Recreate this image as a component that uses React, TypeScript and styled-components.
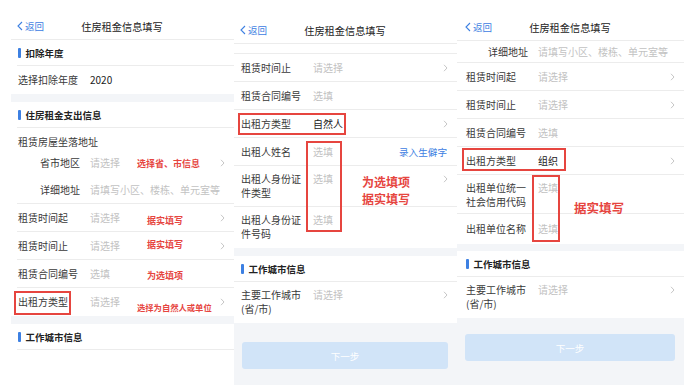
import React from "react";
import styled, { createGlobalStyle } from "styled-components";

const GlobalStyle = createGlobalStyle`
  html, body { margin: 0; padding: 0; background: #fff; }
  body { font-family: "Noto Sans CJK SC", "Noto Sans", sans-serif; }
`;

const RED = "#e6453f";
const BLUE = "#3d80e2";
const GRAY_BG = "#f3f5f8";
const LINE = "#ececec";

const Page = styled.div`
  position: relative;
  width: 684px;
  height: 385px;
  overflow: hidden;
  display: grid;
  grid-template-columns: 234px 223px 227px;
  background: #fff;
`;

// clipped headline of the article, only its bottom edge shows
const Caption = styled.div`
  position: absolute;
  left: 47px;
  top: -11px;
  font-size: 13px;
  line-height: 14px;
  font-weight: 700;
  color: #2f6fe0;
  letter-spacing: 1.5px;
  white-space: nowrap;
`;

const Panel = styled.div<{ $top: number; $left?: number; $pad: number; $inset: number }>`
  position: relative;
  display: flex;
  flex-direction: column;
  padding-top: ${(p) => p.$top}px;
  padding-left: ${(p) => p.$left ?? 0}px;
  background: #fff;
  color: #3a3a3a;
  --pad: ${(p) => p.$pad}px;
  --inset: ${(p) => p.$inset}px;
`;

const Header = styled.div`
  display: grid;
  grid-template-columns: 1fr auto 1fr;
  align-items: center;
  height: 26px;
  padding-left: calc(var(--pad) - 1px);
  border-bottom: 1px solid ${LINE};
`;

const Back = styled.span`
  display: flex;
  align-items: center;
  gap: 2px;
  color: ${BLUE};
  font-size: 9.5px;
`;

const Title = styled.span`
  font-size: 10.2px;
  color: #222;
  margin-left: calc(var(--pad) * -1);
`;

const Section = styled.div`
  display: flex;
  align-items: center;
  gap: 5px;
  height: 25px;
  margin-left: var(--inset);
  padding-left: calc(var(--pad) - var(--inset));
  border-bottom: 1px solid ${LINE};
  font-size: 9.5px;
  font-weight: 700;
  color: #222;

  &::before {
    content: "";
    width: 2.5px;
    height: 10px;
    border-radius: 1px;
    background: ${BLUE};
  }
`;

const Row = styled.div<{ $tall?: boolean; $last?: boolean; $h?: number }>`
  display: flex;
  align-items: ${(p) => (p.$tall ? "flex-start" : "center")};
  box-sizing: border-box;
  min-height: ${(p) => p.$h ?? (p.$tall ? 41 : 28)}px;
  padding: ${(p) => (p.$tall ? "6px" : "0")} 9px 0 calc(var(--pad) - var(--inset));
  margin-left: var(--inset);
  border-bottom: ${(p) => (p.$last ? "none" : `1px solid ${LINE}`)};
  font-size: 10px;
  line-height: 14px;
`;

const Label = styled.span<{ $right?: boolean }>`
  flex: none;
  width: 62px;
  margin-right: 10px;
  text-align: ${(p) => (p.$right ? "right" : "left")};
  color: #3a3a3a;
`;

const Value = styled.span<{ $filled?: boolean }>`
  color: ${(p) => (p.$filled ? "#222" : "#c2c2c2")};
  white-space: nowrap;
`;

const Link = styled.span`
  margin-left: auto;
  padding-right: 1px;
  color: ${BLUE};
  font-size: 9.6px;
`;

const Arrow = styled.span`
  display: flex;
  align-items: center;
  height: 14px;
  margin-left: auto;
`;

const Group = styled.div`
  margin-left: var(--inset);
  padding: 7px 0 0 calc(var(--pad) - var(--inset));
  border-bottom: 1px solid ${LINE};
  font-size: 10px;
  line-height: 14px;
`;

const SubRow = styled.div`
  display: flex;
  align-items: center;
  height: 27px;
  padding-right: 9px;
`;

const Gap = styled.div<{ $h: number }>`
  height: ${(p) => p.$h}px;
  background: ${GRAY_BG};
`;

const Spacer = styled.div<{ $h: number }>`
  height: ${(p) => p.$h}px;
  border-bottom: 1px solid ${LINE};
`;

const Footer = styled.div<{ $top: number }>`
  flex: 1;
  background: ${GRAY_BG};
  padding: ${(p) => p.$top}px 9px 0 8px;
`;

const NextButton = styled.button`
  display: block;
  width: 100%;
  height: 27px;
  border: none;
  border-radius: 3px;
  background: #d1e4f8;
  color: #fff;
  font-family: inherit;
  font-size: 9.5px;
`;

// red annotation layer drawn over the screenshots
const Mark = styled.div<{ $x: number; $y: number; $w: number; $h: number }>`
  position: absolute;
  left: ${(p) => p.$x}px;
  top: ${(p) => p.$y}px;
  width: ${(p) => p.$w}px;
  height: ${(p) => p.$h}px;
  box-sizing: border-box;
  border: 2px solid ${RED};
`;

const Note = styled.div<{ $x: number; $y: number; $size: number }>`
  position: absolute;
  left: ${(p) => p.$x}px;
  top: ${(p) => p.$y}px;
  color: ${RED};
  font-weight: 700;
  font-size: ${(p) => p.$size}px;
  line-height: ${(p) => Math.round(p.$size * 1.4)}px;
  white-space: pre;
`;

const Chevron = () => (
  <Arrow>
    <svg width="5" height="8" viewBox="0 0 5 8">
      <polyline points="1,0.8 4,4 1,7.2" fill="none" stroke="#c6c6c6" strokeWidth="1" />
    </svg>
  </Arrow>
);

const BackButton = () => (
  <Back>
    <svg width="6" height="10" viewBox="0 0 6 10">
      <polyline points="5,1 1,5 5,9" fill="none" stroke={BLUE} strokeWidth="1.1" />
    </svg>
    返回
  </Back>
);

const TopBar = () => (
  <Header>
    <BackButton />
    <Title>住房租金信息填写</Title>
    <span />
  </Header>
);

const App = () => {
  return (
    <>
      <GlobalStyle />
      <Page>
        <Caption>二、填写住房租金信息（以手机端为例）操作</Caption>

        <Panel $top={13} $left={11} $pad={7} $inset={6}>
          <TopBar />
          <Section>扣除年度</Section>
          <Row $last>
            <Label>选择扣除年度</Label>
            <Value $filled>2020</Value>
          </Row>
          <Gap $h={8} />
          <Section>住房租金支出信息</Section>
          <Group>
            <div>租赁房屋坐落地址</div>
            <SubRow>
              <Label $right>省市地区</Label>
              <Value>请选择</Value>
              <Chevron />
            </SubRow>
            <SubRow>
              <Label $right>详细地址</Label>
              <Value>请填写小区、楼栋、单元室等</Value>
            </SubRow>
          </Group>
          <Row>
            <Label>租赁时间起</Label>
            <Value>请选择</Value>
            <Chevron />
          </Row>
          <Row>
            <Label>租赁时间止</Label>
            <Value>请选择</Value>
            <Chevron />
          </Row>
          <Row>
            <Label>租赁合同编号</Label>
            <Value>选填</Value>
          </Row>
          <Row $last>
            <Label>出租方类型</Label>
            <Value>请选择</Value>
            <Chevron />
          </Row>
          <Gap $h={8} />
          <Section>工作城市信息</Section>

          <Note $x={137} $y={157} $size={9}>选择省、市信息</Note>
          <Note $x={147} $y={214} $size={9}>据实填写</Note>
          <Note $x={147} $y={238} $size={9}>据实填写</Note>
          <Note $x={147} $y={269} $size={9}>为选填项</Note>
          <Note $x={137} $y={301} $size={8.3}>选择为自然人或单位</Note>
          <Mark $x={14} $y={291} $w={57} $h={24} />
        </Panel>

        <Panel $top={17} $pad={7} $inset={0}>
          <TopBar />
          <Spacer $h={9} />
          <Row>
            <Label>租赁时间止</Label>
            <Value>请选择</Value>
            <Chevron />
          </Row>
          <Row>
            <Label>租赁合同编号</Label>
            <Value>选填</Value>
          </Row>
          <Row>
            <Label>出租方类型</Label>
            <Value $filled>自然人</Value>
            <Chevron />
          </Row>
          <Row>
            <Label>出租人姓名</Label>
            <Value>选填</Value>
            <Link>录入生僻字</Link>
          </Row>
          <Row $tall>
            <Label>出租人身份证件类型</Label>
            <Value>选填</Value>
            <Chevron />
          </Row>
          <Row $tall $last>
            <Label>出租人身份证件号码</Label>
            <Value>选填</Value>
          </Row>
          <Gap $h={8} />
          <Section>工作城市信息</Section>
          <Row $tall $last>
            <Label>主要工作城市(省/市)</Label>
            <Value>请选择</Value>
            <Chevron />
          </Row>
          <Footer $top={19}>
            <NextButton>下一步</NextButton>
          </Footer>

          <Mark $x={4} $y={113} $w={108} $h={22} />
          <Mark $x={72} $y={141} $w={36} $h={91} />
          <Note $x={128} $y={173} $size={12}>{"为选填项\n据实填写"}</Note>
        </Panel>

        <Panel $top={14} $pad={9} $inset={0}>
          <TopBar />
          <Row $h={22}>
            <Label $right>详细地址</Label>
            <Value>请填写小区、楼栋、单元室等</Value>
          </Row>
          <Row>
            <Label>租赁时间起</Label>
            <Value>请选择</Value>
            <Chevron />
          </Row>
          <Row>
            <Label>租赁时间止</Label>
            <Value>请选择</Value>
            <Chevron />
          </Row>
          <Row>
            <Label>租赁合同编号</Label>
            <Value>选填</Value>
          </Row>
          <Row>
            <Label>出租方类型</Label>
            <Value $filled>组织</Value>
            <Chevron />
          </Row>
          <Row $tall $h={39}>
            <Label>出租单位统一社会信用代码</Label>
            <Value>选填</Value>
          </Row>
          <Row $last $h={30}>
            <Label>出租单位名称</Label>
            <Value>选填</Value>
          </Row>
          <Gap $h={7} />
          <Section>工作城市信息</Section>
          <Row $tall $last>
            <Label>主要工作城市(省/市)</Label>
            <Value>请选择</Value>
            <Chevron />
          </Row>
          <Footer $top={16}>
            <NextButton>下一步</NextButton>
          </Footer>

          <Mark $x={5} $y={148} $w={104} $h={23} />
          <Mark $x={75} $y={175} $w={28} $h={67} />
          <Note $x={117} $y={199} $size={12.5}>据实填写</Note>
        </Panel>
      </Page>
    </>
  );
};

export default App;
